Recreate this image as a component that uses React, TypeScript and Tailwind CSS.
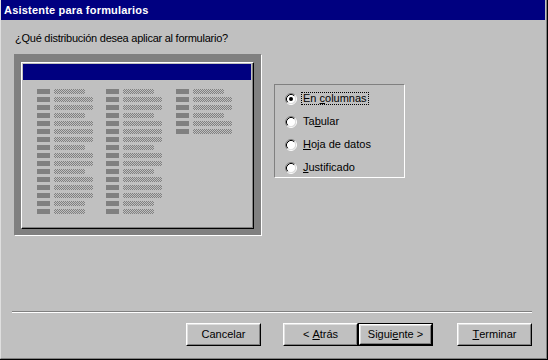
import React from "react";

// filas de la vista previa: true = campo largo
const COL_A = [false, true, true, false, true, true, true, false, true, true, false, true, true, true, false, false];
const COL_C = [false, true, true, false, true, true];

const font = "font-['Liberation_Sans',Arial,sans-serif]";

function PreviewColumn({ rows, width }: { rows: boolean[]; width: string }) {
  return (
    <div className={`flex flex-col gap-[3px] ${width}`}>
      {rows.map((long, i) => (
        <div key={i} className="flex h-[5px] gap-[4px]">
          <div className="h-[5px] w-[13px] bg-[#808080]" />
          <div
            className={`h-[5px] bg-[repeating-conic-gradient(#808080_0%_25%,#c0c0c0_0%_50%)] bg-[length:2px_2px] ${
              long ? "w-[39px]" : "w-[31px]"
            }`}
          />
        </div>
      ))}
    </div>
  );
}

function Radio({ checked }: { checked?: boolean }) {
  return (
    <svg width="12" height="12" viewBox="0 0 12 12" className="shrink-0">
      <circle cx="6" cy="6" r="4.5" fill="#ffffff" />
      <path d="M2.11 9.89A5.5 5.5 0 0 1 9.89 2.11" fill="none" stroke="#808080" strokeWidth="1" />
      <path d="M9.89 2.11A5.5 5.5 0 0 1 2.11 9.89" fill="none" stroke="#ffffff" strokeWidth="1" />
      <path d="M2.82 9.18A4.5 4.5 0 0 1 9.18 2.82" fill="none" stroke="#000000" strokeWidth="1" />
      <path d="M9.18 2.82A4.5 4.5 0 0 1 2.82 9.18" fill="none" stroke="#dfdfdf" strokeWidth="1" />
      {checked && <circle cx="6" cy="6" r="2" fill="#000000" />}
    </svg>
  );
}

function Option({ children, checked }: { children: React.ReactNode; checked?: boolean }) {
  return (
    <div className="flex h-[23px] items-center gap-[4px]">
      <Radio checked={checked} />
      <span
        className={`border px-[1px] text-[11px] leading-[11px] ${
          checked ? "border-dotted border-black" : "border-transparent"
        }`}
      >
        {children}
      </span>
    </div>
  );
}

function Button({ children, isDefault }: { children: React.ReactNode; isDefault?: boolean }) {
  const bevel = (
    <div className="flex h-full w-full border border-t-white border-l-white border-b-black border-r-black">
      <div className="flex flex-1 items-center justify-center whitespace-pre border border-t-[#dfdfdf] border-l-[#dfdfdf] border-b-[#808080] border-r-[#808080] text-[11px] leading-none">
        {children}
      </div>
    </div>
  );
  if (isDefault) {
    return <div className="h-[23px] w-[75px] border border-black">{bevel}</div>;
  }
  return <div className="h-[23px] w-[75px]">{bevel}</div>;
}

export default function App() {
  return (
    <div className={`h-[360px] w-[548px] border-r border-b border-black bg-[#c0c0c0] text-black ${font}`}>
      <div className="flex h-full flex-col border-l border-r border-b border-l-[#dfdfdf] border-r-[#808080] border-b-[#808080]">
        {/* barra de título */}
        <div className="mr-[1px] flex h-[20px] items-center bg-[#000080] pl-[3px] pt-[1px] text-[11px] font-bold tracking-[0.2px] text-white">
          Asistente para formularios
        </div>

        <div className="flex flex-1 flex-col pb-[12px]">
          <div className="ml-[14px] mt-[12px] h-[13px] text-[11px] leading-[13px] tracking-[-0.25px]">
            ¿Qué distribución desea aplicar al formulario?
          </div>

          <div className="mt-[9px] flex">
            {/* vista previa */}
            <div className="ml-[13px] h-[182px] w-[248px] border border-t-[#808080] border-l-[#808080] border-b-white border-r-white bg-[#808080] pl-[6px] pt-[7px]">
              <div className="flex h-[167px] w-[233px] border border-t-white border-l-white border-b-black border-r-black">
                <div className="flex flex-1 flex-col border-b border-r border-b-[#808080] border-r-[#808080] bg-[#c0c0c0] p-[1px]">
                  <div className="h-[16px] bg-[#000080]" />
                  <div className="ml-[14px] mt-[9px] flex">
                    <PreviewColumn rows={COL_A} width="w-[69px]" />
                    <PreviewColumn rows={COL_A} width="w-[70px]" />
                    <PreviewColumn rows={COL_C} width="w-[60px]" />
                  </div>
                </div>
              </div>
            </div>

            {/* opciones */}
            <div className="ml-[12px] mt-[30px] h-[94px] w-[131px] border border-t-[#808080] border-l-[#808080] border-b-white border-r-white pl-[10px] pt-[2px]">
              <Option checked>
                En <u>c</u>olumnas
              </Option>
              <Option>
                Ta<u>b</u>ular
              </Option>
              <Option>
                <u>H</u>oja de datos
              </Option>
              <Option>
                <u>J</u>ustificado
              </Option>
            </div>
          </div>

          <div className="flex-1" />

          <div className="ml-[11px] h-[2px] w-[520px] border-t border-b border-t-[#808080] border-b-white" />

          <div className="mt-[10px] flex">
            <div className="ml-[185px]">
              <Button>Cancelar</Button>
            </div>
            <div className="ml-[22px] flex">
              <Button>
                {"< "}
                <u>A</u>trás
              </Button>
              <Button isDefault>
                Sigui<u>e</u>nte{" >"}
              </Button>
            </div>
            <div className="ml-[24px]">
              <Button>
                <u>T</u>erminar
              </Button>
            </div>
          </div>
        </div>
      </div>
    </div>
  );
}
